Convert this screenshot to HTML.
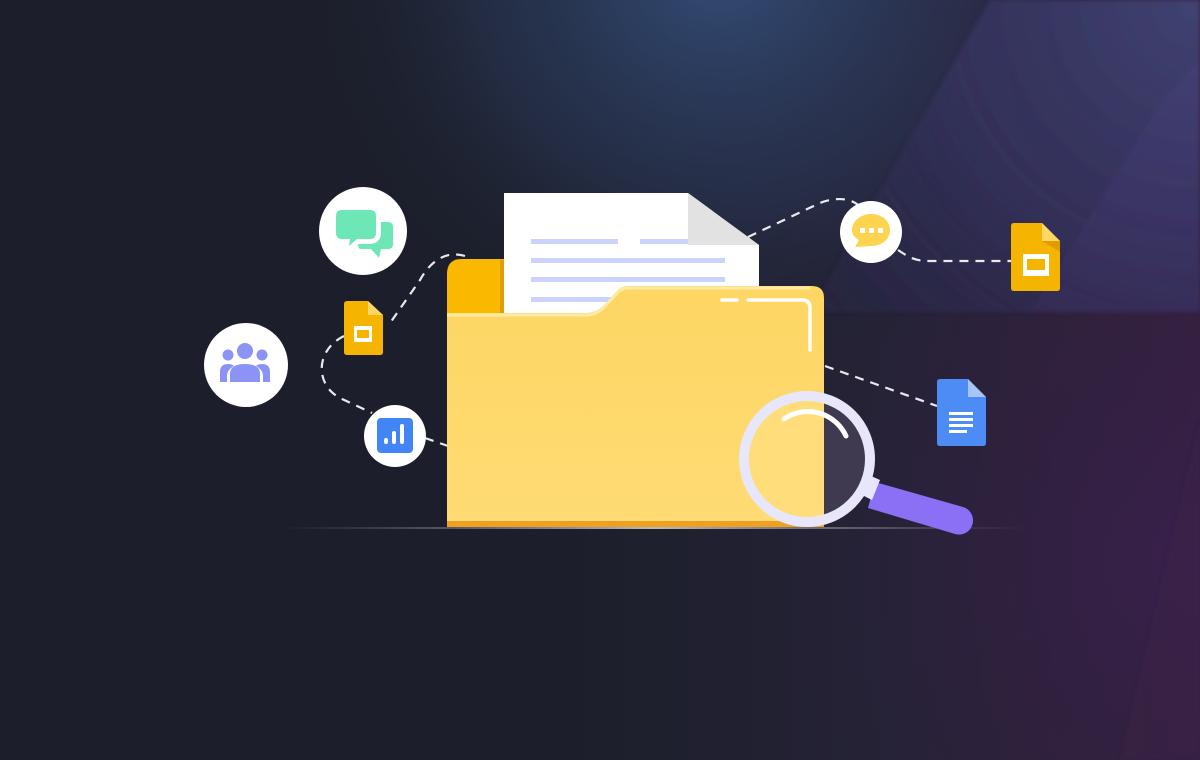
<!DOCTYPE html>
<html><head><meta charset="utf-8"><style>
html,body{margin:0;padding:0;background:#1c1f2a;}
svg{display:block}
</style></head><body>
<svg width="1200" height="760" viewBox="0 0 1200 760" xmlns="http://www.w3.org/2000/svg">
<defs>
<linearGradient id="bg" x1="0" y1="0" x2="1" y2="0">
<stop offset="0" stop-color="#1c1f2b"/><stop offset="0.48" stop-color="#1c1f2b"/><stop offset="0.75" stop-color="#262237"/><stop offset="1" stop-color="#37203f"/>
</linearGradient>
<radialGradient id="blue" cx="720" cy="-40" r="420" gradientUnits="userSpaceOnUse">
<stop offset="0" stop-color="#34507c" stop-opacity="0.95"/><stop offset="0.6" stop-color="#2a3858" stop-opacity="0.5"/><stop offset="1" stop-color="#1c1f2b" stop-opacity="0"/>
</radialGradient>
<radialGradient id="tr" cx="1200" cy="0" r="520" gradientUnits="userSpaceOnUse">
<stop offset="0" stop-color="#4c5086"/><stop offset="0.5" stop-color="#3a3868" stop-opacity="0.8"/><stop offset="1" stop-color="#2c2648" stop-opacity="0"/>
</radialGradient>
<radialGradient id="br" cx="1200" cy="560" r="420" gradientUnits="userSpaceOnUse">
<stop offset="0" stop-color="#3a2050" stop-opacity="0.8"/><stop offset="1" stop-color="#2a2038" stop-opacity="0"/>
</radialGradient>
<linearGradient id="gl" x1="0" x2="1">
<stop offset="0" stop-color="#888" stop-opacity="0"/><stop offset="0.5" stop-color="#bbb"/><stop offset="1" stop-color="#888" stop-opacity="0"/>
</linearGradient>
<linearGradient id="fold" x1="0" y1="0" x2="0" y2="1">
<stop offset="0" stop-color="#fdd663"/><stop offset="1" stop-color="#fedb74"/>
</linearGradient>
<filter id="bl"><feGaussianBlur stdDeviation="2"/></filter>
</defs>
<rect width="1200" height="760" fill="url(#bg)"/>
<rect width="1200" height="500" fill="url(#blue)"/>
<rect width="1200" height="760" fill="url(#br)"/>
<g filter="url(#bl)">
<polygon points="990,0 1200,0 1200,312 810,312" fill="url(#tr)"/>
<polygon points="810,312 1030,312 1165,97 1200,60 1200,0 990,0" fill="#2a2a4c" opacity="0.35"/>
<polygon points="1030,312 1200,312 1200,60 1165,97" fill="#3a3060" opacity="0.35"/>
<polygon points="1200,420 1200,760 1120,760" fill="#3a2048" opacity="0.45"/>
</g>

<!-- dashed paths -->
<g fill="none" stroke="#fff" stroke-width="2.2" stroke-dasharray="9 7" opacity="0.9">
<path d="M465,256 C445,250 430,262 420,280 L388,326"/>
<path d="M344,336 C315,350 315,385 340,398 L372,413"/>
<path d="M425,438 L448,446"/>
<path d="M748,237 L820,203 C835,197 850,198 858,205"/>
<path d="M898,250 C910,258 915,261 930,261 L1011,261"/>
<path d="M825,366 L937,406"/>
</g>

<!-- ground line -->
<rect x="280" y="527" width="750" height="2" fill="url(#gl)"/>

<!-- folder back -->
<path d="M447,274 Q447,259 462,259 L504,259 L504,320 L447,320 Z" fill="#fbb800"/>
<rect x="500" y="260" width="6" height="60" fill="#c99000" opacity="0.6"/>
<!-- paper -->
<path d="M504,193 L688,193 L759,245 L759,320 L504,320 Z" fill="#fff"/>
<path d="M688,193 L759,245 L688,245 Z" fill="#e2e2e2"/>
<g fill="#cbd3fb">
<rect x="531" y="239" width="87" height="5"/><rect x="640" y="239" width="48" height="5"/>
<rect x="531" y="258" width="194" height="5"/>
<rect x="531" y="277" width="194" height="5"/>
<rect x="531" y="297" width="100" height="5"/>
</g>
<!-- folder front -->
<path d="M447,313 L585,313 Q598,313 606,303 L618,290 Q622,286 628,286 L812,286 Q824,286 824,298 L824,527 L447,527 Z" fill="url(#fold)"/>
<path d="M447,315 L585,315 Q598,315 606,305 L618,292 Q622,288 628,288 L810,288" fill="none" stroke="#ffe9a8" stroke-width="3"/>
<rect x="447" y="521" width="377" height="6" fill="#f0a020"/>
<g fill="none" stroke="#fff" stroke-width="3.5" stroke-linecap="round">
<path d="M722,300 L737,300"/>
<path d="M748,300 L802,300 Q810,300 810,308 L810,350"/>
</g>

<!-- magnifier -->
<path d="M875,482 L963,507 A14,14 0 0 1 955,534 L868,508 Z" fill="#8b6ff5"/>
<path d="M862,472 L880,480 L872,500 L856,492 Z" fill="#e8e6fb"/>
<clipPath id="lens"><circle cx="807" cy="459" r="63"/></clipPath>
<g clip-path="url(#lens)">
<rect x="740" y="390" width="84" height="140" fill="#fedd7a"/>
<rect x="824" y="390" width="60" height="140" fill="#3f3a4f"/>
</g>
<circle cx="807" cy="459" r="63" fill="none" stroke="#e8e6fb" stroke-width="10"/>
<path d="M784,419 A42,42 0 0 1 846,436" fill="none" stroke="#fff" stroke-width="5" stroke-linecap="round"/>

<!-- circles -->
<g fill="#fff">
<circle cx="363" cy="231" r="44"/>
<circle cx="246" cy="365" r="42"/>
<circle cx="395" cy="436" r="31"/>
<circle cx="871" cy="232" r="31"/>
</g>
<!-- green chat -->
<g fill="#6ee7b7">
<path d="M342,210 L370,210 Q376,210 376,216 L376,233 Q376,239 370,239 L357,239 L349,246 L350,239 L342,239 Q336,239 336,233 L336,216 Q336,210 342,210 Z"/>
<path d="M381,222 L388,222 Q393,222 393,227 L393,244 Q393,249 388,249 L381,249 L379,258 L371,249 L361,249 Q358,249 358,244 L369,244 Q381,244 381,232 Z"/>
</g>
<!-- people -->
<g fill="#8b93f5">
<circle cx="228" cy="355" r="5.5"/><circle cx="262" cy="355" r="5.5"/><circle cx="245" cy="351" r="8"/>
<path d="M230,382 L230,374 Q230,364 245,364 Q260,364 260,374 L260,382 Z"/>
<path d="M220,382 L220,372 Q220,364 228,364 Q232,364 234,366 Q227,370 227,376 L227,382 Z"/>
<path d="M270,382 L270,372 Q270,364 262,364 Q258,364 256,366 Q263,370 263,376 L263,382 Z"/>
</g>
<!-- chart -->
<rect x="377" y="418" width="36" height="35" rx="4" fill="#4285f4"/>
<g fill="#fff"><rect x="384" y="438" width="4" height="6" rx="2"/><rect x="392" y="431" width="4" height="13" rx="2"/><rect x="400" y="424" width="4" height="20" rx="2"/></g>
<!-- yellow chat -->
<path d="M871,214 C883,214 890,222 890,230 C890,239 882,246 871,246 L855,247 L859,240 C854,237 852,234 852,230 C852,222 860,214 871,214 Z" fill="#fdd34f"/>
<g fill="#fff"><rect x="860" y="228" width="5" height="5"/><rect x="869" y="228" width="5" height="5"/><rect x="878" y="228" width="5" height="5"/></g>

<!-- slides small -->
<path d="M347,301 L368,301 L383,315 L383,352 Q383,355 380,355 L347,355 Q344,355 344,352 L344,304 Q344,301 347,301 Z" fill="#f4b400"/>
<path d="M368,301 L383,315 L368,315 Z" fill="#fdd663"/>
<rect x="354" y="326" width="18" height="16" fill="#fff"/><rect x="357" y="330" width="12" height="8" fill="#f4b400"/>
<!-- slides big -->
<path d="M1014,223 L1042,223 L1060,241 L1060,288 Q1060,291 1057,291 L1014,291 Q1011,291 1011,288 L1011,226 Q1011,223 1014,223 Z" fill="#f4b400"/>
<path d="M1042,223 L1060,241 L1042,241 Z" fill="#fdd663"/>
<path d="M1042,241 L1060,241 L1060,252 Z" fill="#e09c00"/>
<rect x="1023" y="254" width="26" height="22" fill="#fff"/><rect x="1027" y="259" width="18" height="11" fill="#f4b400"/>
<!-- docs -->
<path d="M940,379 L968,379 L986,397 L986,443 Q986,446 983,446 L940,446 Q937,446 937,443 L937,382 Q937,379 940,379 Z" fill="#4e8cf5"/>
<path d="M968,379 L986,397 L968,397 Z" fill="#a8c5fa"/>
<g fill="#fff"><rect x="949" y="412" width="24" height="3"/><rect x="949" y="418" width="24" height="3"/><rect x="949" y="424" width="24" height="3"/><rect x="949" y="430" width="18" height="3"/></g>
</svg>
</body></html>
